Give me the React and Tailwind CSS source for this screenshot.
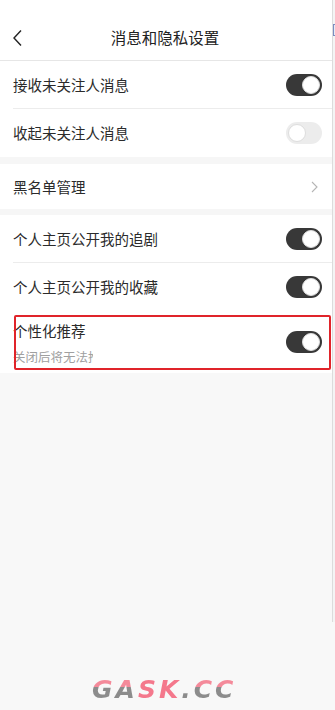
import React, { useState } from 'react';

const Toggle = ({ on }) => (
	<div
		className={
			on
				? 'w-[36px] h-[22px] rounded-full bg-[#383838] flex items-center justify-end px-[2px]'
				: 'w-[36px] h-[22px] rounded-full bg-[#ececec] flex items-center justify-start px-[2px]'
		}
	>
		<div className="w-[18px] h-[18px] rounded-full bg-white border border-[#dddddd]" />
	</div>
);

const Row = ({ label, on, divider }) => (
	<div className="h-[48px] bg-white flex items-center pl-[13px] pr-[10px] relative">
		<span className="flex-1 text-[14.5px] text-[#2b2b2b]">{label}</span>
		<Toggle on={on} />
		{divider && <div className="absolute left-[13px] right-0 bottom-0 h-px bg-[#ececec]" />}
	</div>
);

const wmStyle = {
	backgroundImage: 'linear-gradient(180deg, #f48a9a 0%, #f48a9a 42%, #8c8c8c 42%, #8c8c8c 100%)',
	fontFamily: '"DejaVu Sans", sans-serif'
};

const App = () => {
	const [rows] = useState([
		{ label: '接收未关注人消息', on: true },
		{ label: '收起未关注人消息', on: false }
	]);
	return (
		<div
			className="min-h-[710px] bg-[#f8f8f8] flex"
			style={{ fontFamily: '"Noto Sans CJK SC", "Noto Sans", sans-serif' }}
		>
			<div className="w-[332px] flex flex-col">
				{/* header */}
				<div className="h-[61px] bg-white flex items-center relative border-b border-[#e6e6e6] pt-[16px]">
					<svg className="absolute left-[12px] top-[29px]" width="12" height="18" viewBox="0 0 12 18" fill="none">
						<path d="M9 1.5 L2 9 L9 16.5" stroke="#222" strokeWidth="1.4" />
					</svg>
					<div className="flex-1 text-center text-[15.5px] text-[#222] pr-[2px]">消息和隐私设置</div>
				</div>

				<div className="bg-white">
					{rows.map((r, i) => (
						<Row key={i} label={r.label} on={r.on} divider={i === 0} />
					))}
				</div>

				<div className="h-[7px] bg-[#f6f6f6]" />

				<div className="h-[45px] bg-white flex items-center pl-[13px] pr-[14px]">
					<span className="flex-1 text-[14.5px] text-[#2b2b2b]">黑名单管理</span>
					<svg width="7" height="12" viewBox="0 0 7 12" fill="none">
						<path d="M1 1 L6 6 L1 11" stroke="#b5b5b5" strokeWidth="1.1" />
					</svg>
				</div>

				<div className="h-[6px] bg-[#f6f6f6]" />

				<div className="bg-white">
					<Row label="个人主页公开我的追剧" on divider />
					<Row label="个人主页公开我的收藏" on />
				</div>

				{/* personalised recommendation */}
				<div className="relative bg-white h-[62px] flex items-center pl-[13px] pr-[10px]">
					<div className="flex-1 flex flex-col pt-[2px]">
						<span className="text-[14.5px] text-[#2b2b2b] leading-[20px]">个性化推荐</span>
						<span className="text-[12.5px] text-[#a0a0a0] leading-[16px] mt-[8px] w-[80px] overflow-hidden whitespace-nowrap">
							关闭后将无法推荐
						</span>
					</div>
					<Toggle on />
					<div className="absolute left-[14px] right-[1px] top-[4px] h-[55px] border-2 border-[#e0242a] rounded-[2px]" />
				</div>
			</div>
			<div className="w-[3px] flex flex-col">
				<div className="h-[622px] border-l border-[#dcdcdc] bg-[#f4f4f4] relative">
					<div className="absolute top-[24px] left-0 w-[3px] h-[12px] border border-[#7a8cc0] bg-[#e8ecf6]" />
				</div>
			</div>
			<div className="fixed left-[92px] top-[675px] text-[25px] font-black italic tracking-[3px] leading-none">
				<span className="bg-clip-text text-transparent" style={wmStyle}>
					GA
				</span>
				<span className="text-[#f4788c]" style={{ fontFamily: '"DejaVu Sans", sans-serif' }}>SK</span>
				<span className="bg-clip-text text-transparent" style={wmStyle}>
					.CC
				</span>
			</div>
		</div>
	);
};

export default App;
